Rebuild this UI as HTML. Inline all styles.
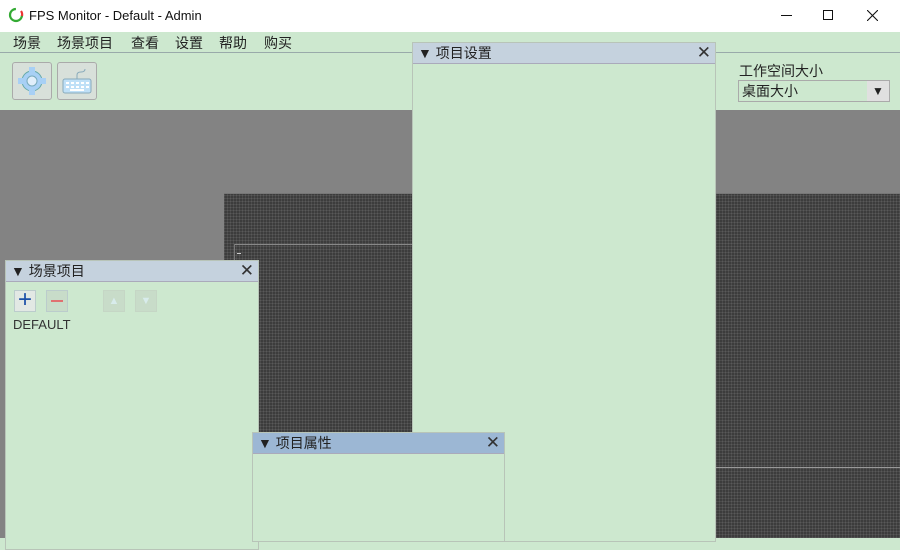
<!DOCTYPE html>
<html><head><meta charset="utf-8"><style>
*{margin:0;padding:0;box-sizing:border-box}
body{width:900px;height:538px;overflow:hidden;position:relative;background:#cde8cf;font-family:"Liberation Sans","Noto Sans CJK SC",sans-serif;font-size:14px;color:#222}
.abs{position:absolute}
.grid{background-color:#3c3c3c;background-image:repeating-linear-gradient(0deg,rgba(255,255,255,.08) 0 1px,transparent 1px 3px),repeating-linear-gradient(90deg,rgba(255,255,255,.08) 0 1px,transparent 1px 3px)}
.panel{position:absolute;background:#cde8cf;border:1px solid #b8c4b8}
.hdr{height:21px;background:#c5d2de;border-bottom:1px solid #aab;font-size:14px;line-height:20px;padding-left:5px;position:relative}
.hdr .x{position:absolute;right:4px;top:0;font-size:17px;color:#333}
.btn{position:absolute;width:22px;height:22px;border:1px solid #bcc;background:#c8dcc9}
.m{position:absolute;top:33px;font-size:14px}
</style></head><body>
<div class="abs" style="left:0;top:0;width:900px;height:32px;background:#fff"></div>
<svg class="abs" style="left:8px;top:7px" width="16" height="16"><circle cx="8" cy="8" r="6" fill="none" stroke="#3a3" stroke-width="2.2" stroke-dasharray="28 10"/><path d="M13 4 A6 6 0 0 1 14 9" stroke="#e33" stroke-width="2.2" fill="none"/></svg>
<div class="abs" style="left:29px;top:8px;font-size:13px;color:#111">FPS Monitor - Default - Admin</div>
<div class="abs" style="left:781px;top:15px;width:11px;height:1px;background:#111"></div>
<div class="abs" style="left:823px;top:10px;width:10px;height:10px;border:1px solid #111"></div>
<svg class="abs" style="left:867px;top:10px" width="11" height="11"><path d="M0 0L11 11M11 0L0 11" stroke="#111" stroke-width="1.1"/></svg>
<div class="m" style="left:13px">场景</div>
<div class="m" style="left:57px">场景项目</div>
<div class="m" style="left:131px">查看</div>
<div class="m" style="left:175px">设置</div>
<div class="m" style="left:219px">帮助</div>
<div class="m" style="left:264px">购买</div>
<div class="abs" style="left:0;top:52px;width:900px;height:1px;background:#9aa"></div>
<div class="abs" style="left:12px;top:62px;width:40px;height:38px;border:1px solid #aaa;border-radius:3px;background:#d8e0da"></div>
<svg class="abs" style="left:17px;top:66px" width="30" height="30"><circle cx="15" cy="15" r="10" fill="#a8d0f5" stroke="#6aa" stroke-width="1"/><circle cx="15" cy="15" r="5" fill="#e0eefa" stroke="#7ab" /><g fill="#a8d0f5"><rect x="12" y="1" width="6" height="6"/><rect x="12" y="23" width="6" height="6"/><rect x="1" y="12" width="6" height="6"/><rect x="23" y="12" width="6" height="6"/></g></svg>
<div class="abs" style="left:57px;top:62px;width:40px;height:38px;border:1px solid #aaa;border-radius:3px;background:#d8e0da"></div>
<svg class="abs" style="left:61px;top:67px" width="32" height="28"><path d="M16 12 V8 Q16 5 20 5 Q24 5 24 2" stroke="#8ab" fill="none"/><rect x="2" y="12" width="28" height="14" rx="2" fill="#bfe0f7" stroke="#8ab"/><g fill="#fff"><rect x="5" y="15" width="3" height="2"/><rect x="10" y="15" width="3" height="2"/><rect x="15" y="15" width="3" height="2"/><rect x="20" y="15" width="3" height="2"/><rect x="25" y="15" width="3" height="2"/><rect x="5" y="19" width="3" height="2"/><rect x="10" y="19" width="3" height="2"/><rect x="15" y="19" width="3" height="2"/><rect x="20" y="19" width="3" height="2"/><rect x="25" y="19" width="3" height="2"/><rect x="9" y="22" width="14" height="2"/></g></svg>
<div class="abs" style="left:739px;top:61px;font-size:14px">工作空间大小</div>
<div class="abs" style="left:738px;top:80px;width:152px;height:22px;border:1px solid #aaa;background:#cde8cf;font-size:14px;line-height:20px;padding-left:3px">桌面大小<span style="position:absolute;right:0;top:0;width:22px;height:20px;background:#e0e0e0;text-align:center;font-size:12px">▼</span></div>
<div class="abs" style="left:0;top:110px;width:900px;height:428px;background:#838383"></div>
<div class="abs grid" style="left:224px;top:193px;width:676px;height:345px;border-top:1px solid #777"></div>
<div class="abs" style="left:234px;top:244px;width:480px;height:1px;background:#888"></div>
<div class="abs" style="left:234px;top:244px;width:1px;height:300px;background:#777"></div>
<div class="abs" style="left:237px;top:253px;width:4px;height:1px;background:#ccc"></div>
<div class="abs" style="left:715px;top:467px;width:185px;height:1px;background:#999"></div>
<div class="panel" style="left:412px;top:42px;width:304px;height:500px"><div class="hdr">▼ 项目设置<span class="x">✕</span></div></div>
<div class="panel" style="left:5px;top:260px;width:254px;height:290px"><div class="hdr">▼ 场景项目<span class="x">✕</span></div>
<div class="btn" style="left:8px;top:29px;color:#1b4fa8;font-size:24px;line-height:18px;text-align:center;background:#e2e8e4">+</div>
<div class="btn" style="left:40px;top:29px;"><div style="margin:9px 4px 0;height:2px;background:#e07070"></div></div>
<div class="btn" style="left:97px;top:29px;border-color:#c5d6c5;color:#d8ecec;font-size:11px;text-align:center;line-height:20px">▲</div>
<div class="btn" style="left:129px;top:29px;border-color:#c5d6c5;color:#d8ecec;font-size:11px;text-align:center;line-height:20px">▼</div>
<div class="abs" style="left:7px;top:56px;font-size:13px;color:#333">DEFAULT</div></div>
<div class="panel" style="left:252px;top:432px;width:253px;height:110px"><div class="hdr" style="background:#9cb7d4">▼ 项目属性<span class="x">✕</span></div></div>
</body></html>
